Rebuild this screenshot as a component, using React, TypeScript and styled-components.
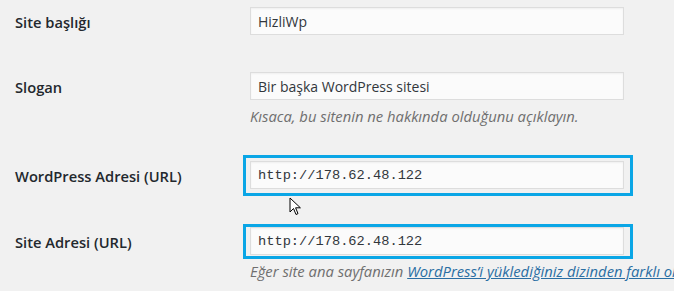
import styled, { createGlobalStyle } from 'styled-components';

const GlobalStyle = createGlobalStyle`
  html, body {
    margin: 0;
    padding: 0;
    background: #f1f1f1;
    overflow: hidden;
  }
  body {
    font-family: 'Open Sans', 'Noto Sans', sans-serif;
    color: #23282d;
  }
`;

const Page = styled.div`
  position: relative;
  width: 674px;
  height: 291px;
  overflow: hidden;
  padding-top: 7px;
  box-sizing: border-box;
`;

const Row = styled.div<{ $gap: number }>`
  display: grid;
  grid-template-columns: 250px 374px;
  margin-bottom: ${(p) => p.$gap}px;
`;

const Label = styled.div`
  height: 28px;
  box-sizing: border-box;
  display: flex;
  align-items: center;
  padding-left: 15px;
  padding-top: 2px;
  font-size: 14.7px;
  font-weight: 600;
  color: #23282d;
`;

const Field = styled.div`
  display: flex;
  flex-direction: column;
  min-width: 0;
`;

const Input = styled.div<{ $mono?: boolean }>`
  height: 28px;
  box-sizing: border-box;
  display: flex;
  align-items: center;
  padding: 0 7px;
  background: #fbfbfb;
  border: 1px solid #dddddd;
  box-shadow: inset 0 1px 2px rgba(0, 0, 0, 0.05);
  font-family: ${(p) =>
    p.$mono ? "'Liberation Mono', 'DejaVu Sans Mono', monospace" : "'Open Sans', sans-serif"};
  font-size: ${(p) => (p.$mono ? '13.7px' : '14px')};
  color: #32373c;
  white-space: nowrap;
`;

const Highlight = styled.div<{ $top: number; $bottom: number }>`
  border: 3px solid #0aa6e6;
  padding: ${(p) => `${p.$top}px 6px ${p.$bottom}px 4px`};
  margin: ${(p) => `-${p.$top + 3}px -9px -${p.$bottom + 3}px -7px`};
`;

const Description = styled.p<{ $top: number }>`
  margin: ${(p) => p.$top}px 0 0;
  font-size: 14.8px;
  font-style: italic;
  color: #6f6f6f;
  line-height: 20px;
  white-space: nowrap;
`;

const Link = styled.a`
  color: #2a6ea3;
  text-decoration: underline;
`;

const Cursor = styled.svg`
  position: absolute;
  left: 289px;
  top: 197px;
`;

const App = () => (
  <>
    <GlobalStyle />
    <Page>
      <Row $gap={37}>
        <Label>Site başlığı</Label>
        <Field>
          <Input>HizliWp</Input>
        </Field>
      </Row>
      <Row $gap={35}>
        <Label>Slogan</Label>
        <Field>
          <Input>Bir başka WordPress sitesi</Input>
          <Description $top={6}>
            Kısaca, bu sitenin ne hakkında olduğunu açıklayın.
          </Description>
        </Field>
      </Row>
      <Row $gap={38}>
        <Label>WordPress Adresi (URL)</Label>
        <Field>
          <Highlight $top={3} $bottom={4}>
            <Input $mono>http://178.62.48.122</Input>
          </Highlight>
        </Field>
      </Row>
      <Row $gap={0}>
        <Label>Site Adresi (URL)</Label>
        <Field>
          <Highlight $top={0} $bottom={1}>
            <Input $mono>http://178.62.48.122</Input>
          </Highlight>
          <Description $top={6}>
            Eğer site ana sayfanızın{' '}
            <Link href="#">
              WordPress’i yüklediğiniz dizinden farklı olmasını istiyorsanız, buraya
              adresi girin
            </Link>
            .
          </Description>
        </Field>
      </Row>
      <Cursor width="13" height="19" viewBox="0 0 13 19">
        <path
          d="M1 1 L1 15 L4.5 11.5 L7 17.5 L9 16.6 L6.6 10.8 L11.4 10.8 Z"
          fill="#fff"
          stroke="#000"
          strokeWidth="1"
          strokeLinejoin="round"
        />
      </Cursor>
    </Page>
  </>
);

export default App;
